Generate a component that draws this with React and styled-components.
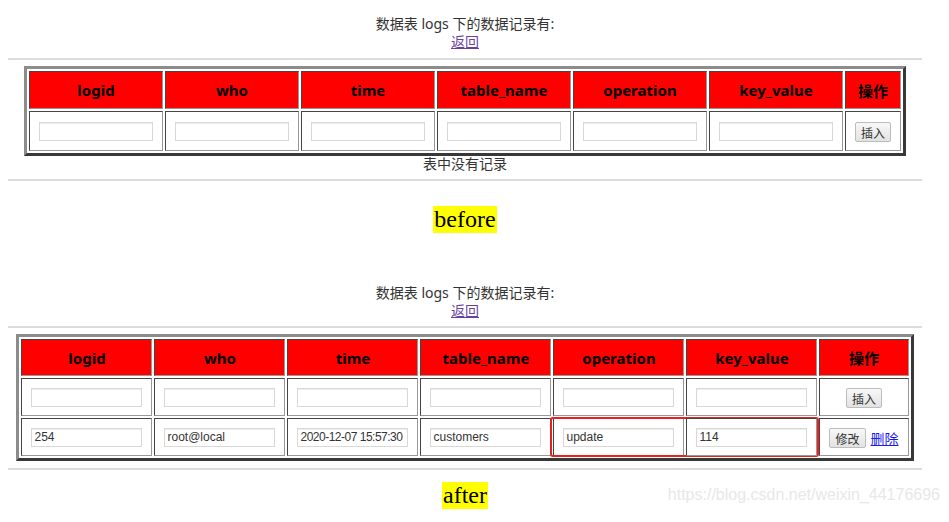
import React from 'react';
import styled, { createGlobalStyle } from 'styled-components';

const GlobalStyle = createGlobalStyle`
  * { box-sizing: border-box; }
  body {
    margin: 0;
    background: #fff;
    font-family: "Noto Sans", "Noto Sans CJK SC", sans-serif;
  }
`;

const Page = styled.div`
  width: 914px;
  margin-left: 8px;
  padding-top: 15px;
`;

const Snapshot = styled.section`
  display: flex;
  flex-direction: column;
  align-items: center;
  margin-top: ${(p) => p.$mt || 0}px;
`;

const Title = styled.div`
  font-size: 14px;
  line-height: 18px;
  color: #333;
`;

const BackLink = styled.a`
  font-size: 14px;
  line-height: 17px;
  color: #6b3fa0;
  text-decoration: underline;
`;

const Rule = styled.hr`
  align-self: stretch;
  margin: ${(p) => p.$mt || 8}px 0 0;
  border: none;
  border-top: 2px solid #dcdcdc;
`;

const Grid = styled.table`
  margin-top: 6px;
  border-collapse: separate;
  border-spacing: 2px;
  border: 3px outset #8c8c8c;
  table-layout: fixed;
`;

const Head = styled.th`
  width: ${(p) => p.$w}px;
  height: ${(p) => p.$h}px;
  background: #ff0000;
  border: 1px inset #999;
  font-size: 15px;
  font-weight: 700;
  color: #000;
  text-align: center;
  padding: 0;
`;

const Cell = styled.td`
  position: relative;
  height: ${(p) => p.$h}px;
  border: 1px inset #999;
  padding: 0 9px;
  text-align: center;
  white-space: nowrap;
`;

const Field = styled.input`
  display: block;
  width: 100%;
  height: 19px;
  border: 1px solid #d8d8d8;
  box-shadow: inset 0 1px 1px #eee;
  padding: 0 2px;
  font-family: "Liberation Sans", Arial, sans-serif;
  font-size: 12px;
  letter-spacing: ${(p) => (p.$tight ? '-0.5px' : 'normal')};
  color: #333;
  background: #fff;
`;

const Button = styled.button`
  height: 20px;
  padding: 0 5px;
  border: 1px solid #bdbdbd;
  border-radius: 2px;
  background: linear-gradient(#f8f8f8, #e2e2e2);
  font-family: "Noto Sans CJK SC", sans-serif;
  font-size: 12px;
  color: #333;
  vertical-align: middle;
`;

const DeleteLink = styled.a`
  margin-left: 5px;
  font-size: 14px;
  color: #1a1aee;
  text-decoration: underline;
  vertical-align: middle;
`;

const Highlight = styled.div`
  position: absolute;
  left: -4px;
  top: -2px;
  width: 269px;
  height: 40px;
  border: 2px solid #e8231f;
  border-radius: 3px;
  pointer-events: none;
`;

const Empty = styled.div`
  margin-top: -1px;
  font-size: 14px;
  line-height: 17px;
  color: #333;
`;

const CaptionRow = styled.div`
  display: grid;
  grid-template-columns: 1fr auto 1fr;
  align-items: end;
  margin-top: ${(p) => p.$mt}px;
`;

const Caption = styled.span`
  grid-column: 2;
  display: inline-block;
  background: #ffff00;
  font-family: "Liberation Serif", "Times New Roman", serif;
  font-size: 24px;
  line-height: 27px;
  padding: 0 1px;
  color: #000;
`;

const Watermark = styled.span`
  grid-column: 3;
  justify-self: end;
  margin-right: -18px;
  margin-bottom: 5px;
  font-family: "Liberation Sans", Arial, sans-serif;
  font-size: 16px;
  color: #e8e8e8;
`;

const columns = ['logid', 'who', 'time', 'table_name', 'operation', 'key_value'];

const LogTable = ({ colW, actionW, headH, rowH, records }) => (
  <Grid>
    <thead>
      <tr>
        {columns.map((c) => (
          <Head key={c} $w={colW} $h={headH}>{c}</Head>
        ))}
        <Head $w={actionW} $h={headH}>操作</Head>
      </tr>
    </thead>
    <tbody>
      <tr>
        {columns.map((c) => (
          <Cell key={c} $h={rowH}><Field defaultValue="" /></Cell>
        ))}
        <Cell $h={rowH}><Button>插入</Button></Cell>
      </tr>
      {records.map((r) => (
        <tr key={r.logid}>
          {columns.map((c) => (
            <Cell key={c} $h={rowH}>
              <Field defaultValue={r[c]} $tight={c === 'time'} />
              {c === 'operation' && <Highlight />}
            </Cell>
          ))}
          <Cell $h={rowH}>
            <Button>修改</Button>
            <DeleteLink href="#">删除</DeleteLink>
          </Cell>
        </tr>
      ))}
    </tbody>
  </Grid>
);

const records = [
  {
    logid: '254',
    who: 'root@local',
    time: '2020-12-07 15:57:30',
    table_name: 'customers',
    operation: 'update',
    key_value: '114',
  },
];

export default function App() {
  return (
    <>
      <GlobalStyle />
      <Page>
        <Snapshot>
          <Title>数据表 logs 下的数据记录有:</Title>
          <BackLink href="#">返回</BackLink>
          <Rule />
          <LogTable colW={134} actionW={54} headH={38} rowH={40} records={[]} />
          <Empty>表中没有记录</Empty>
          <Rule $mt={7} />
        </Snapshot>
        <CaptionRow $mt={25}>
          <Caption>before</Caption>
        </CaptionRow>

        <Snapshot $mt={51}>
          <Title>数据表 logs 下的数据记录有:</Title>
          <BackLink href="#">返回</BackLink>
          <Rule $mt={7} />
          <LogTable colW={131} actionW={86} headH={37} rowH={38} records={records} />
          <Rule $mt={7} />
        </Snapshot>
        <CaptionRow $mt={12}>
          <Caption>after</Caption>
          <Watermark>https://blog.csdn.net/weixin_44176696</Watermark>
        </CaptionRow>
      </Page>
    </>
  );
}
